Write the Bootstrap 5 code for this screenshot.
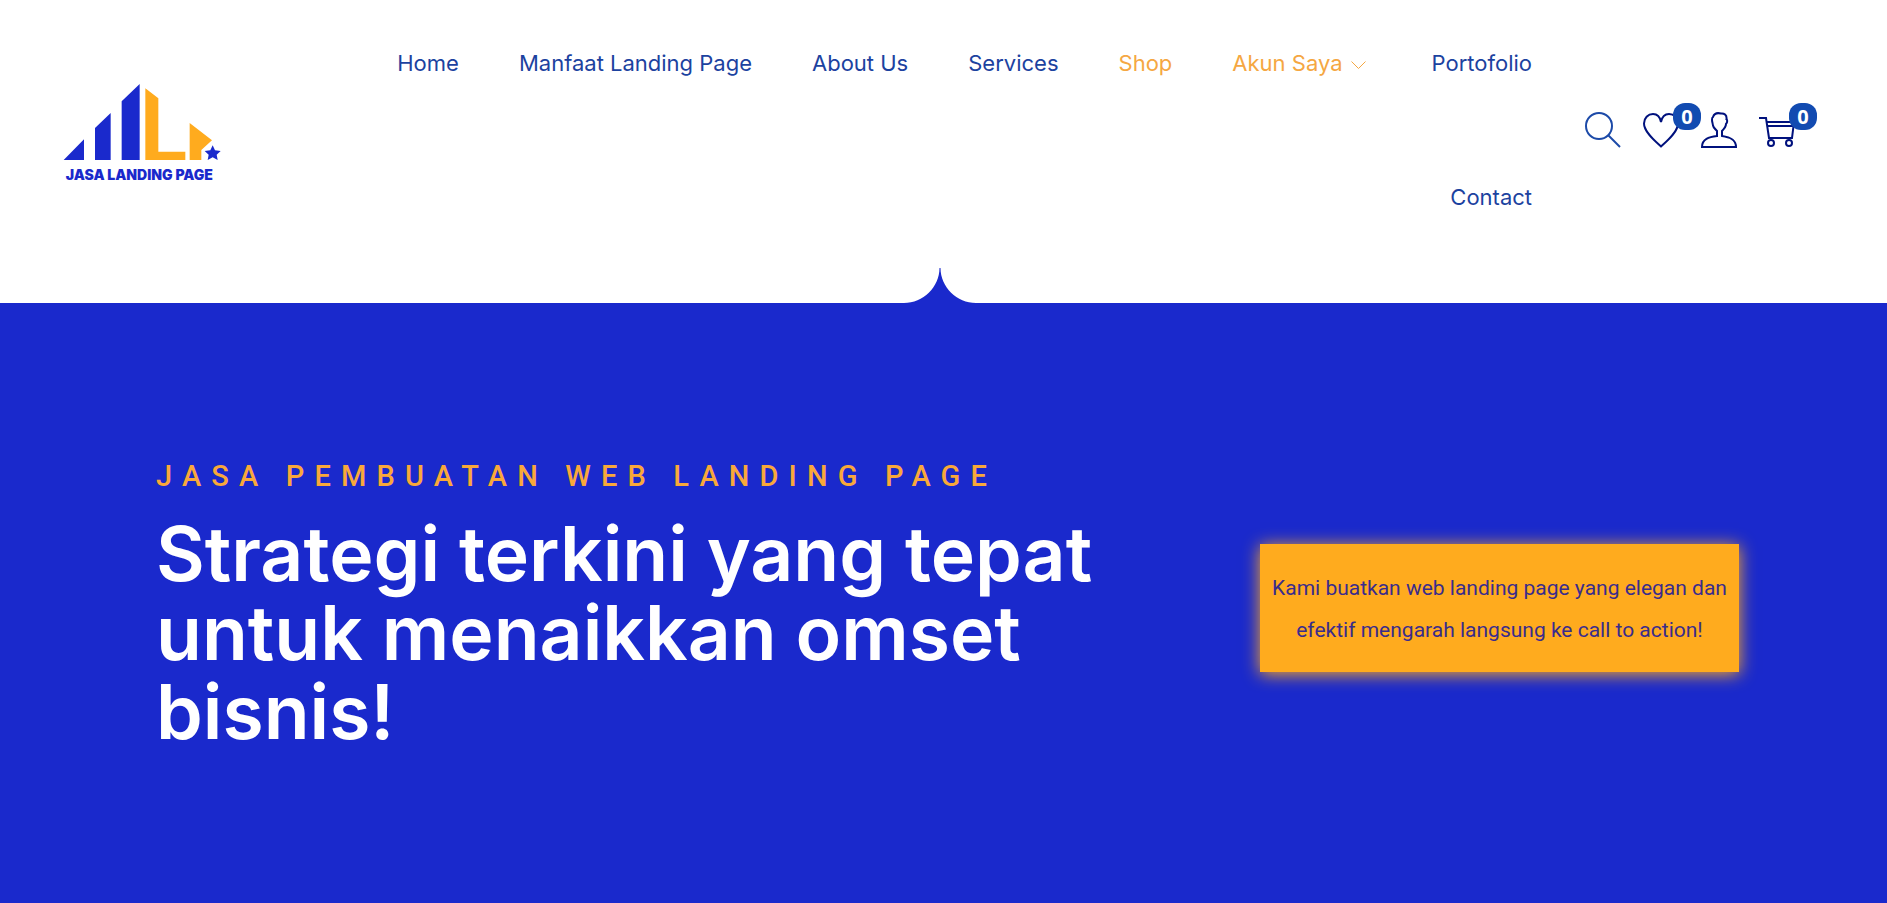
<!DOCTYPE html>
<html lang="id">
<head>
<meta charset="utf-8">
<meta name="viewport" content="width=device-width, initial-scale=1">
<title>Jasa Landing Page</title>
<link href="https://cdn.jsdelivr.net/npm/bootstrap@5.3.0/dist/css/bootstrap.min.css" rel="stylesheet">
<style>
  :root { --royal: #1a29cc; --navy: #00117d; --link-blue: #1c429f; --amber: #ffab1e; --badge-blue: #124bb1; }
  body { font-family: Inter, "Open Sans", sans-serif; background: #fff; color: var(--link-blue); }
  .site-header { padding: 0 92px 35px 60px; }
  .brand-logo { width: 168px; height: 104px; margin-bottom: 4px; }
  .menu { column-gap: 60px; font-size: 22px; line-height: 30px; padding: 0 53px 0 120px; }
  .menu .nav-item { padding: 48px 0 56px; }
  .menu .nav-link { padding: 0; color: var(--link-blue); }
  .menu .nav-link.hot { color: #f5a742; }
  .menu .arrow { margin: 0 6px 0 8px; }
  .tools { gap: 22px; margin-bottom: 8px; }
  .tool { color: var(--navy); line-height: 0; }
  .tool svg { width: 36px; height: 36px; }
  .count { left: 30px; top: -9px; width: 28px; height: 27px; border-radius: 12px; background: var(--badge-blue); color: #fff; font: 700 20px/27px "Open Sans", sans-serif; }
  .hero { background: var(--royal); min-height: calc(100vh - 303px); padding: 10px 148px 0 156px; }
  .peak { left: calc(50% - 40px); top: -35px; width: 72px; height: 36px; }
  .eyebrow { font: 500 29px/42px Roboto, sans-serif; letter-spacing: .35em; color: #f9a83a; margin-bottom: 17px; }
  .headline { font-size: 75px; line-height: 79px; font-weight: 600; color: #fff; margin: 0 0 10px; }
  .intro { flex: 0 1 960px; }
  .pitch { flex: 0 1 479px; background: var(--amber); box-shadow: 0 2px 16px var(--amber); padding: 23px 8px 21px; font: 400 21px/42px Roboto, sans-serif; color: #3a2c8c; }
</style>
</head>
<body>
<header class="site-header d-flex align-items-center">
  <a href="#" class="flex-shrink-0" aria-label="Jasa Landing Page">
    <svg class="brand-logo d-block" viewBox="60 30 504 312">
      <g fill="#1a29cc">
        <path d="M71 270L132 208V270ZM165 270V174L212 129V270ZM245 270V94L299 42V270Z"/>
        <path d="M518 226L525 241L542 243L530 254L533 270L518 262L503 270L506 254L494 243L511 241Z"/>
        <text x="77" y="329" font-family="Inter, sans-serif" font-weight="900" font-size="42" fill="#1a29cc">JASA LANDING PAGE</text>
      </g>
      <path fill="#ffab1e" d="M316 55L355 85V245H436V270H316ZM449 159L516 211L484 240V270H449Z"/>
    </svg>
  </a>
  <nav class="flex-grow-1" aria-label="Menu utama">
    <ul class="menu nav justify-content-end">
      <li class="nav-item"><a class="nav-link" href="#">Home</a></li>
      <li class="nav-item"><a class="nav-link" href="#">Manfaat Landing Page</a></li>
      <li class="nav-item"><a class="nav-link" href="#">About Us</a></li>
      <li class="nav-item"><a class="nav-link" href="#">Services</a></li>
      <li class="nav-item"><a class="nav-link hot" href="#">Shop</a></li>
      <li class="nav-item"><a class="nav-link hot" href="#">Akun Saya<svg class="arrow" width="15" height="9" viewBox="0 0 15 9" fill="none" stroke="currentColor"><path d="M.5 .5L7.500 7.500L14.500 .5"/></svg></a></li>
      <li class="nav-item"><a class="nav-link" href="#">Portofolio</a></li>
      <li class="nav-item"><a class="nav-link" href="#">Contact</a></li>
    </ul>
  </nav>
  <div class="tools d-flex flex-shrink-0">
    <a class="tool" href="#" aria-label="Cari"><svg viewBox="0 0 36 36" fill="none" stroke="#1c4aa8" stroke-width="2"><circle cx="14" cy="14" r="13"/><path d="M23 23L35 35"/></svg></a>
    <a class="tool position-relative" href="#" aria-label="Favorit"><svg viewBox="0 0 36 36" fill="none" stroke="currentColor" stroke-width="2"><path d="M18 34.500C12 29 1 20 1 11.500C1 6 5 2 10 2C14 2 17 5 18 10C19 5 22 2 26 2C31 2 35 6 35 11.500C35 20 24 29 18 34.500Z"/></svg><span class="count position-absolute text-center">0</span></a>
    <a class="tool" href="#" aria-label="Akun"><svg viewBox="0 0 36 36" fill="none" stroke="currentColor" stroke-width="2"><path d="M16 19V24C8 25 1 27 1 35H35C35 27 28 25 21 24V19C24 16 25 14 25 12C27 10 26 7 25.500 7C26 3 23 1 20 1.500C16 .5 13 2 12 5C10.500 6 11 9 11.500 11C12 15 13 16 16 19Z"/></svg></a>
    <a class="tool position-relative" href="#" aria-label="Keranjang"><svg viewBox="0 0 36 36" fill="none" stroke="currentColor" stroke-width="2"><path d="M0 6H7L10 26H33L35 10H8M8 14H34"/><circle cx="12" cy="31" r="3"/><circle cx="30" cy="31" r="3"/></svg><span class="count position-absolute text-center">0</span></a>
  </div>
</header>

<main class="hero position-relative d-flex flex-wrap align-items-center justify-content-between">
  <svg class="peak position-absolute" viewBox="0 0 72 36" fill="#1a29cc" aria-hidden="true"><path d="M0 36V35C19 35 35.500 19 35.500 0H36.500C36.500 19 53 35 72 35V36Z"/></svg>
  <div class="intro">
    <p class="eyebrow text-uppercase text-nowrap">Jasa Pembuatan Web Landing Page</p>
    <h1 class="headline">Strategi terkini yang tepat untuk menaikkan omset bisnis!</h1>
  </div>
  <p class="pitch text-center mb-0">Kami buatkan web landing page yang elegan dan efektif mengarah langsung ke call to action!</p>
</main>
<script src="https://cdn.jsdelivr.net/npm/bootstrap@5.3.0/dist/js/bootstrap.bundle.min.js"></script>
</body>
</html>
